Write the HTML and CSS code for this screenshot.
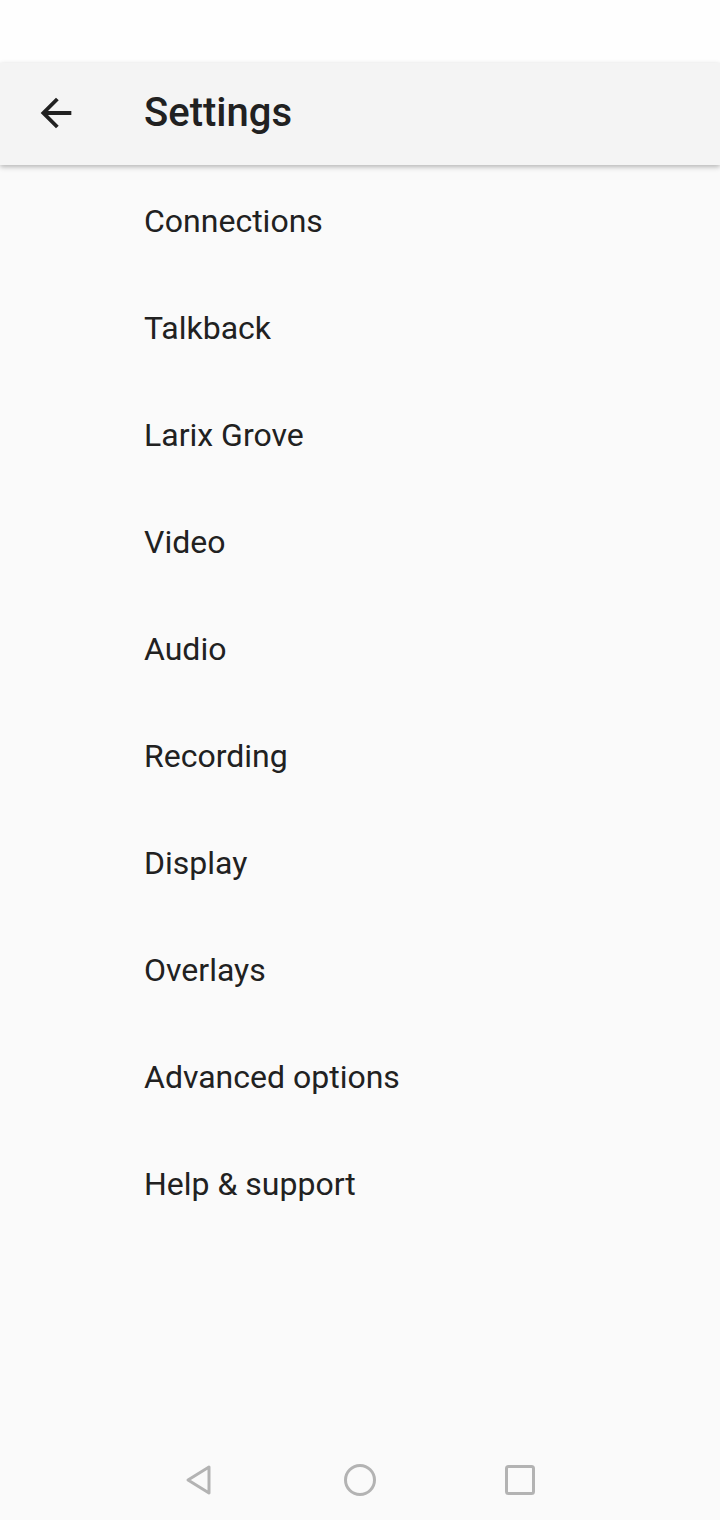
FILE: index.html
```html
<!DOCTYPE html>
<html lang="en">
<head>
  <meta charset="UTF-8">
  <meta name="viewport" content="width=device-width, initial-scale=1.0">
  <title>Settings</title>
  <link rel="stylesheet" href="styles.css">
</head>
<body>
  <div class="status-bar"></div>
  <header class="toolbar">
    <button class="back" aria-label="Back">
      <svg width="46" height="46" viewBox="0 0 24 24"><path d="M20 11H7.83l5.59-5.59L12 4l-8 8 8 8 1.41-1.41L7.83 13H20v-2z" fill="#212121"/></svg>
    </button>
    <h1>Settings</h1>
  </header>
  <!-- settings list -->
  <ul class="menu">
    <li>Connections</li>
    <li>Talkback</li>
    <li>Larix Grove</li>
    <li>Video</li>
    <li>Audio</li>
    <li>Recording</li>
    <li>Display</li>
    <li>Overlays</li>
    <li>Advanced options</li>
    <li>Help &amp; support</li>
  </ul>
  <nav class="nav-bar">
    <svg width="36" height="36" viewBox="0 0 36 36"><path d="M27 5 L6 18 L27 31 Z" fill="none" stroke="#b3b3b3" stroke-width="3" stroke-linejoin="round"/></svg>
    <svg width="36" height="36" viewBox="0 0 36 36"><circle cx="18" cy="18" r="14.5" fill="none" stroke="#b3b3b3" stroke-width="3"/></svg>
    <svg width="36" height="36" viewBox="0 0 36 36"><rect x="4.5" y="4.5" width="27" height="27" rx="2" fill="none" stroke="#b3b3b3" stroke-width="3"/></svg>
  </nav>
</body>
</html>
```

FILE: styles.css
```css
html, body {
  margin: 0;
  padding: 0;
}
body {
  width: 720px;
  height: 1520px;
  background-color: #fafafa;
  font-family: Roboto, "Noto Sans", sans-serif;
  color: #212121;
  display: flex;
  flex-direction: column;
  overflow: hidden;
}
.status-bar {
  height: 63px;
  background-color: #fefefe;
}
.toolbar {
  height: 102px;
  background-color: #f4f4f4;
  display: flex;
  align-items: center;
  box-shadow: 0 2px 5px rgba(0, 0, 0, 0.28);
  position: relative;
  z-index: 1;
}
.back {
  border: none;
  background: none;
  padding: 0;
  margin: 0 0 2px 33px;
  width: 46px;
  height: 46px;
  display: flex;
}
.toolbar h1 {
  margin: 0 0 4px 65px;
  font-size: 40px;
  font-weight: 500;
  letter-spacing: 0;
}
.menu {
  list-style: none;
  margin: 0;
  padding: 3px 0 0;
  flex: 1;
}
.menu li {
  height: 107px;
  line-height: 107px;
  padding-left: 144px;
  font-size: 32px;
}
.nav-bar {
  height: 80px;
  background-color: #fafafa;
  display: flex;
  justify-content: center;
  align-items: center;
  gap: 124px;
}
```
